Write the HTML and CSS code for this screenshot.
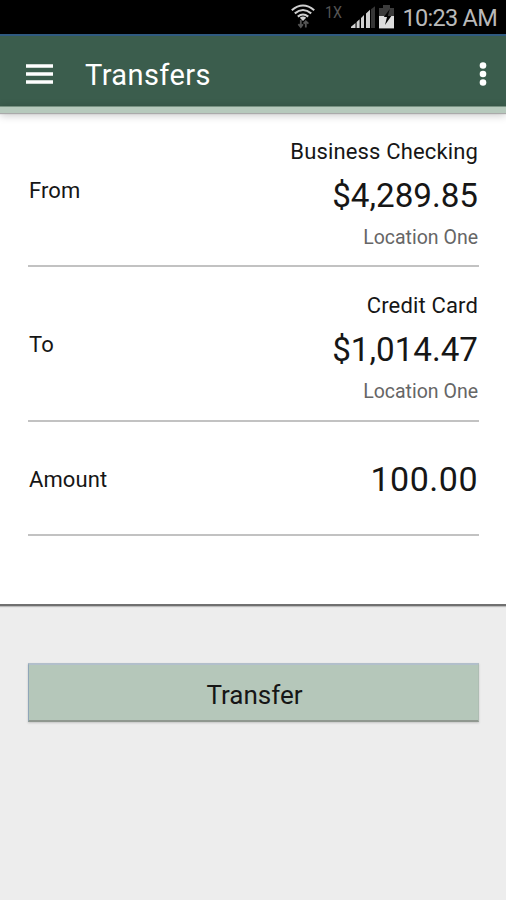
FILE: index.html
```html
<!DOCTYPE html>
<html lang="en">
<head>
<meta charset="utf-8">
<title>Transfers</title>
<link rel="stylesheet" href="styles.css">
</head>
<body>
<div class="status">
  <svg class="status-icons" width="120" height="34" viewBox="280 0 120 34">
    <g fill="none" stroke="#d0d0d0" stroke-width="2.1">
      <path d="M291.8 10.2Q303 0.8 314.2 10.2"/>
      <path d="M294.8 13.4Q303 6.6 311.2 13.4"/>
      <path d="M297.8 16.6Q303 12.4 308.2 16.6"/>
    </g>
    <path d="M299.8 17.8Q303 15.4 306.2 17.8L303 21z" fill="#d0d0d0"/>
    <path d="M300.8 20v7M298.4 24.2l2.4 2.8 2.2-2.8M305.8 27.5v-6M303.6 23.6l2.2-2.4 2.6 2.4" fill="none" stroke="#555" stroke-width="1.8"/>
    <text class="network" x="325" y="18" textLength="17" lengthAdjust="spacingAndGlyphs">1X</text>
    <path d="M351 28v-1.2l4.5-3.8v5zM356.6 28v-6l3-2.7v8.7zM361 28v-10l3-3v13zM366 28v-14.5l4-3.8v18.3z" fill="#d0d0d0"/>
    <path d="M371 28V9.2l4-3v21.8z" fill="#363636"/>
    <path d="M379 8h4V5h7v3h4v9h-15z" fill="#3c3c3c"/>
    <path d="M379 16h15v12.4h-15z" fill="#dedede"/>
    <path d="M389.8 9l-6 8h3.2l-2 8 6.3-9h-3.5z" fill="#050505"/>
  </svg>
  <span class="clock">10:23 AM</span>
</div>
<header class="bar">
  <svg class="menu" width="28" height="20" viewBox="0 0 28 20"><path d="M0 2h27M0 10h27M0 18h27" stroke="#fff" stroke-width="3.4"/></svg>
  <h1 class="title">Transfers</h1>
  <svg class="more" width="8" height="26" viewBox="0 0 8 26" fill="#fff"><circle cx="4" cy="4.5" r="3.3"/><circle cx="4" cy="13" r="3.3"/><circle cx="4" cy="21.5" r="3.3"/></svg>
</header>
<div class="accent"></div>
<main class="form">
  <section class="row account first">
    <span class="label">From</span>
    <div class="details">
      <div class="name">Business Checking</div>
      <div class="value">$4,289.85</div>
      <div class="place">Location One</div>
    </div>
  </section>
  <section class="row account">
    <span class="label">To</span>
    <div class="details">
      <div class="name">Credit Card</div>
      <div class="value">$1,014.47</div>
      <div class="place">Location One</div>
    </div>
  </section>
  <section class="row amount">
    <span class="label">Amount</span>
    <div class="value hundred">100.00</div>
  </section>
</main>
<button class="submit">Transfer</button>
</body>
</html>
```
FILE: styles.css
```css
* { box-sizing: border-box; }
body {
  margin: 0;
  height: 900px;
  overflow: hidden;
  display: flex;
  flex-direction: column;
  background: #ededed;
  color: #161616;
  font-family: Roboto, "Liberation Sans", sans-serif;
}
.status {
  height: 36px;
  flex: none;
  display: flex;
  justify-content: flex-end;
  background: #000;
  border-bottom: 2px solid #2f5a80;
  padding-right: 9px;
}
.status-icons { flex: none; }
.network { font-size: 17px; fill: #555; }
.clock {
  width: 97px;
  text-align: right;
  white-space: nowrap;
  color: #b9b9b9;
  font-size: 23.5px;
  line-height: 36px;
  letter-spacing: -0.7px;
}
.bar {
  height: 70px;
  flex: none;
  display: flex;
  align-items: center;
  padding: 5px 19px 0 26px;
  background: #3b5d4d;
}
.title {
  margin: 0 auto 0 31px;
  color: #fff;
  font-size: 29px;
  font-weight: 400;
  line-height: 40px;
  letter-spacing: 0.4px;
  padding-top: 2px;
}
.accent {
  height: 7px;
  flex: none;
  background: #b6c9bc;
  border-top: 1px solid #789282;
  position: relative;
  box-shadow: 0 1px 1px #aaa, 0 2px 9px rgba(0, 0, 0, .25);
}
.form {
  height: 493px;
  flex: none;
  background: #fff;
  padding: 0 27px 0 28px;
  border-bottom: 2px solid #707070;
  box-shadow: 0 1px 1px #bbb;
}
.row {
  display: flex;
  justify-content: space-between;
  align-items: center;
  border-bottom: 2px solid #c2c2c2;
}
.account { height: 155px; }
.first { height: 154px; }
.amount { height: 114px; }
.label { font-size: 22px; line-height: 28px; letter-spacing: 0.1px; padding: 3px 0 0 1px; }
.details { text-align: right; padding: 8px 1px 0 0; }
.name { font-size: 22px; line-height: 30px; letter-spacing: 0.15px; }
.value { font-size: 33.2px; line-height: 58px; }
.place { font-size: 19.5px; line-height: 25px; color: #666; }
.hundred { font-size: 34px; letter-spacing: 0.5px; padding: 2px 1px 0 0; }
.submit {
  width: 451px;
  height: 59px;
  flex: none;
  margin: 57px 0 0 28px;
  padding: 4px 0 0 2px;
  border: 1px solid #8fa6b8;
  border-top: 2px solid #b2bfcb;
  border-right-color: #aebdb3;
  border-bottom: 2px solid #909890;
  background: #b5c7ba;
  box-shadow: 0 1px 2px #c4c4c4;
  color: #161616;
  font: 26px/50px Roboto, "Liberation Sans", sans-serif;
}
```
